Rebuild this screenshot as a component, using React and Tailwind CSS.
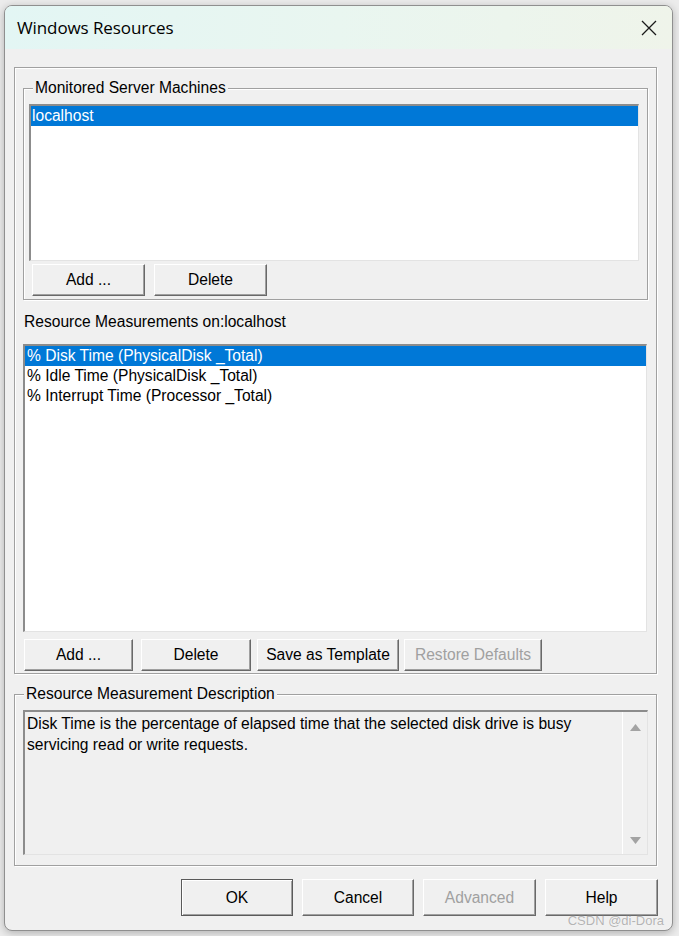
import React from "react";

const etched = "border border-[#a0a0a0] shadow-[1px_1px_0_#ffffff,inset_1px_1px_0_#ffffff]";
const sunken = "border-t-2 border-l-2 border-b border-r border-t-[#8c8c8c] border-l-[#8c8c8c] border-b-[#e3e3e3] border-r-[#e3e3e3]";

function Btn({ children, w, disabled, isDefault, className = "" }) {
  return (
    <button
      type="button"
      className={`h-full shrink-0 bg-[#f0f0f0] text-[15.6px] leading-none border ${
        isDefault
          ? "border-[#5a5a5a] shadow-[inset_1px_1px_0_#ffffff,inset_-1px_-1px_0_#a0a0a0]"
          : "border-t-white border-l-white border-b-[#696969] border-r-[#696969] shadow-[inset_-1px_-1px_0_#a0a0a0]"
      } ${disabled ? "text-[#a0a0a0]" : "text-black"} ${w} ${className}`}
    >
      {children}
    </button>
  );
}

function Group({ label, className = "", children }) {
  return (
    <div className={`relative ${etched} ${className}`}>
      <span className="absolute left-[9px] top-[-11px] bg-[#f0f0f0] px-[2px] text-[15.6px] leading-[20px] text-black">
        {label}
      </span>
      {children}
    </div>
  );
}

function Row({ children, selected, pad }) {
  return (
    <div
      className={`h-[20px] leading-[20px] text-[15.6px] whitespace-nowrap ${pad} ${
        selected ? "bg-[#0078d7] text-white" : "text-black"
      }`}
    >
      {children}
    </div>
  );
}

export default function App() {
  return (
    <div className="relative w-[679px] h-[936px] overflow-hidden bg-[#ececec] font-['Liberation_Sans',Arial,sans-serif]">
      <div className="pl-[4px] pt-[5px]">
        <div className="relative w-[669px] h-[926px] rounded-[8px] border border-[#8f8f8f] bg-[#f0f0f0] overflow-hidden shadow-[0_2px_8px_rgba(0,0,0,0.25)] flex flex-col">
          {/* title bar */}
          <div className="h-[43px] shrink-0 flex items-center justify-between pl-[12px] pr-[15px] bg-gradient-to-r from-[#e3f6f4] via-[#e9f6f0] to-[#eff4ea]">
            <span className="text-[17px] text-black font-['Open_Sans','Noto_Sans',sans-serif] tracking-[-0.1px]">
              Windows Resources
            </span>
            <svg width="16" height="16" viewBox="0 0 16 16">
              <path d="M1 1 L15 15 M15 1 L1 15" stroke="#1a1a1a" strokeWidth="1.3" fill="none" />
            </svg>
          </div>

          {/* body */}
          <div className="flex flex-col pl-[9px] pr-[15px]">
            {/* property page panel */}
            <div className={`mt-[18px] h-[607px] ${etched} px-[8px] flex flex-col`}>
              <Group label="Monitored Server Machines" className="mt-[20px] h-[212px] pt-[15px] pl-[5px] pr-[8px] flex flex-col">
                <div className={`h-[157px] bg-white ${sunken}`}>
                  <Row selected pad="pl-[1px]">localhost</Row>
                </div>
                <div className="mt-[3px] h-[32px] flex pl-[3px] gap-[9px]">
                  <Btn w="w-[113px]">Add ...</Btn>
                  <Btn w="w-[113px]">Delete</Btn>
                </div>
              </Group>

              <div className="mt-[12px] ml-[1px] h-[20px] leading-[20px] text-[15.6px] text-black">
                Resource Measurements on:localhost
              </div>

              <div className={`mt-[12px] h-[288px] mr-[1px] bg-white ${sunken}`}>
                <Row selected pad="pl-[2px]">% Disk Time (PhysicalDisk _Total)</Row>
                <Row pad="pl-[2px]">% Idle Time (PhysicalDisk _Total)</Row>
                <Row pad="pl-[2px]">% Interrupt Time (Processor _Total)</Row>
              </div>

              <div className="mt-[7px] h-[32px] flex pl-[1px]">
                <Btn w="w-[109px]">Add ...</Btn>
                <Btn w="w-[110px]" className="ml-[8px]">Delete</Btn>
                <Btn w="w-[142px]" className="ml-[6px]">Save as Template</Btn>
                <Btn w="w-[138px]" className="ml-[5px]" disabled>Restore Defaults</Btn>
              </div>
            </div>

            {/* description group */}
            <Group label="Resource Measurement Description" className="mt-[20px] h-[172px] pt-[15px] pl-[8px] pr-[8px] flex flex-col">
              <div className={`h-[145px] bg-[#f0f0f0] flex ${sunken}`}>
                <div className="flex-1 pl-[2px] pt-[1px] text-[15.6px] leading-[21px] text-black">
                  Disk Time is the percentage of elapsed time that the selected disk drive is busy servicing read or write requests.
                </div>
                <div className="w-[25px] shrink-0 border-l border-white flex flex-col items-center justify-between pt-[12px] pb-[10px]">
                  <svg width="11" height="7" viewBox="0 0 11 7">
                    <path d="M5.5 0 L11 7 L0 7 Z" fill="#a3a3a3" />
                  </svg>
                  <svg width="11" height="7" viewBox="0 0 11 7">
                    <path d="M0 0 L11 0 L5.5 7 Z" fill="#a3a3a3" />
                  </svg>
                </div>
              </div>
            </Group>

            {/* dialog buttons */}
            <div className="mt-[13px] h-[37px] flex justify-end gap-[9px] mr-[-1px]">
              <Btn w="w-[112px]" isDefault>OK</Btn>
              <Btn w="w-[112px]">Cancel</Btn>
              <Btn w="w-[113px]" disabled>Advanced</Btn>
              <Btn w="w-[113px]">Help</Btn>
            </div>
          </div>

          <span className="absolute right-[8px] bottom-[1px] text-[13px] leading-[16px] text-[#b4b4b4] [text-shadow:0_0_1px_#ffffff]">
            CSDN @di-Dora
          </span>
        </div>
      </div>
    </div>
  );
}
